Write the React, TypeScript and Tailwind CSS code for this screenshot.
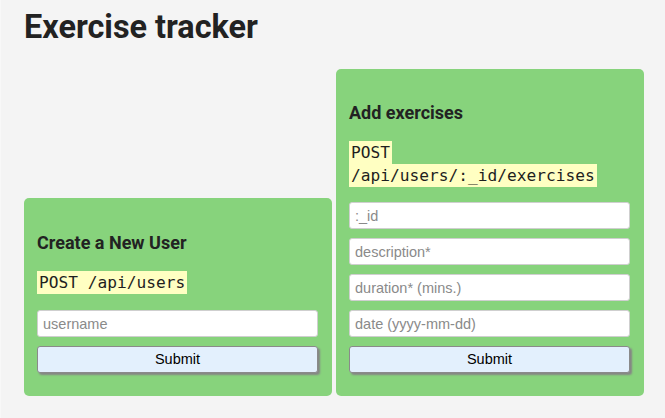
export default function App() {
  const inputClass =
    "block w-full h-[27px] rounded-[3px] border border-[#cfcfcf] bg-white px-[5px] text-[14.5px] text-[#222] placeholder:text-[#8a8a8a] outline-none [font-family:'Liberation_Sans',Arial,sans-serif]";
  const buttonClass =
    "block w-full h-[27px] rounded-[3px] border border-[#8a8a8a] bg-[#e3f0fd] text-[14.5px] text-black shadow-[2px_2px_2px_#858585] [font-family:'Liberation_Sans',Arial,sans-serif]";
  const codeClass =
    "bg-[#ffffc2] px-[2px] py-[2px] text-[16.2px] text-[#1e1e1e] [font-family:'DejaVu_Sans_Mono',monospace] [box-decoration-break:clone]";

  return (
    <div className="min-h-[418px] border-l border-l-[#f8f8f8] bg-[#f4f4f4] pt-[8px] pl-[23px] [font-family:Roboto,'Noto_Sans',sans-serif] text-[#222]">
      <h1 className="text-[32.4px] leading-[38px] font-bold">Exercise tracker</h1>

      <div className="mt-[23px] flex items-end gap-[4px]">
        <div className="w-[308px] rounded-[5px] bg-[#87d37c] pl-[13px] pr-[14px] pt-[34px] pb-[23px]">
          <h3 className="text-[18px] leading-[22px] font-bold">Create a New User</h3>
          <p className="mt-[17px] mb-[16px] leading-[23px]">
            <code className={codeClass}>POST /api/users</code>
          </p>
          <input className={inputClass} placeholder="username" />
          <button className={`${buttonClass} mt-[9px]`}>Submit</button>
        </div>

        <div className="w-[308px] rounded-[5px] bg-[#87d37c] pl-[13px] pr-[14px] pt-[33px] pb-[23px]">
          <h3 className="text-[18px] leading-[22px] font-bold">Add exercises</h3>
          <p className="mt-[17px] mb-[15px] leading-[23px]">
            <code className={codeClass}>POST /api/users/:_id/exercises</code>
          </p>
          <div className="flex flex-col gap-[9px]">
            <input className={inputClass} placeholder=":_id" />
            <input className={inputClass} placeholder="description*" />
            <input className={inputClass} placeholder="duration* (mins.)" />
            <input className={inputClass} placeholder="date (yyyy-mm-dd)" />
            <button className={buttonClass}>Submit</button>
          </div>
        </div>
      </div>
    </div>
  );
}
